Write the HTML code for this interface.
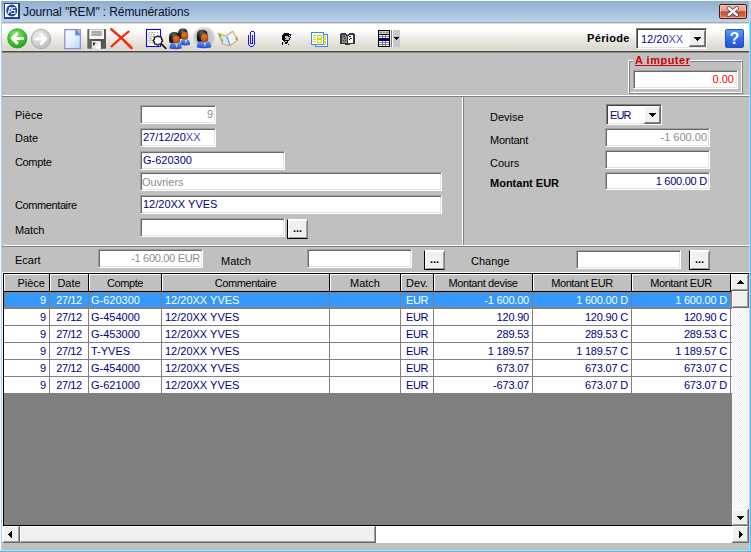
<!DOCTYPE html>
<html><head><meta charset="utf-8">
<style>
*{box-sizing:border-box}
html,body{margin:0;padding:0}
body{width:751px;height:552px;overflow:hidden;position:relative;background:#c0c0c0;font-family:"Liberation Sans",sans-serif;font-size:11px;color:#000}
.a{position:absolute}
.t{position:absolute;white-space:nowrap;line-height:13px;font-size:11px}
.edit{position:absolute;background:#fff;border:1px solid;border-color:#a0a0a0 #fff #fff #a0a0a0;box-shadow:inset 1px 1px 0 #696969, inset -1px -1px 0 #e3e3e3}
.edit span{position:absolute;top:2px;line-height:13px;white-space:nowrap}
.btn{position:absolute;background:#f0f0f0;border:1px solid;border-color:#fff #808080 #000 #000;box-shadow:inset 1px 1px 0 #fff, inset -1px -1px 0 #a0a0a0}
.btn i{position:absolute;left:0;right:0;text-align:center;top:2px;font-style:normal;font-weight:bold;font-size:11px;line-height:13px;letter-spacing:0}
.nv{color:#000080}
.gy{color:#808080}
</style></head><body>
<!-- window borders -->
<div class="a" style="left:0;top:0;width:1px;height:552px;background:#f6f9fc"></div>
<div class="a" style="left:1px;top:0;width:1px;height:552px;background:#b4cde8"></div>
<div class="a" style="left:749px;top:0;width:1px;height:552px;background:#c8d4ec"></div>
<div class="a" style="left:750px;top:0;width:1px;height:552px;background:linear-gradient(#b8d0ea 0px,#b8d0ea 18px,#38c8f0 24px)"></div>
<div class="a" style="left:0;top:550px;width:751px;height:1px;background:#c8d4ec"></div>
<div class="a" style="left:0;top:551px;width:751px;height:1px;background:#38c8f0"></div>
<!-- title bar -->
<div class="a" style="left:0;top:0;width:751px;height:1px;background:#f4f8fc"></div>
<div class="a" style="left:1px;top:1px;width:748px;height:21px;background:linear-gradient(#8fadcd,#bad3ec)"></div>
<div class="a" style="left:2px;top:22px;width:747px;height:1px;background:#aeaba2"></div>
<div class="a" style="left:2px;top:23px;width:747px;height:1px;background:#dcd9d2"></div>
<!-- app icon -->
<div class="a" style="left:4px;top:3px;width:16px;height:16px;background:#283c90"></div>
<div class="a" style="left:5px;top:4px;width:13px;height:13px;background:#fff"></div>
<svg class="a" style="left:4px;top:3px" width="16" height="16" viewBox="4 3 16 16">
<ellipse cx="11.75" cy="10.5" rx="5.5" ry="5.9" fill="#1c4aa6"/>
<path d="M8 13.8 L9.9 7.6 H10.7 L11.6 10.8 M8.8 11.6 H11.2" fill="none" stroke="#fff" stroke-width="1.05"/>
<path d="M15.4 7.7 H12.2 V10.4 H14.9 V13.5 H11" fill="none" stroke="#fff" stroke-width="1.05"/>
</svg>
<div class="t" style="left:23px;top:5px;font-size:12px;line-height:15px;color:#10102a;letter-spacing:-0.1px">Journal "REM" : Rémunérations</div>
<!-- close -->
<div class="a" style="left:719px;top:4px;width:28px;height:15px;border:1px solid #4a1a1a;border-radius:2px;background:linear-gradient(#f0b8a8 0%,#e69c88 45%,#c64a2c 52%,#d4603e 80%,#e08868 100%);box-shadow:inset 0 0 0 1px rgba(255,220,210,0.45)"></div>
<svg class="a" style="left:719px;top:4px" width="28" height="15" viewBox="719 4 28 15"><path d="M728.5 8 L737 15 M737 8 L728.5 15" stroke="#3a3a56" stroke-width="3.8" stroke-linecap="round"/><path d="M728.5 8 L737 15 M737 8 L728.5 15" stroke="#fff" stroke-width="2.3" stroke-linecap="round"/></svg>

<!-- toolbar -->
<div class="a" style="left:2px;top:24px;width:747px;height:27px;background:linear-gradient(#ffffff 0%,#fdfdfc 25%,#ebe8e2 60%,#dbd7cf 92%,#e3e0d6 100%)"></div>
<div class="a" style="left:2px;top:51px;width:747px;height:1px;background:#444"></div>
<div class="a" style="left:2px;top:52px;width:747px;height:1px;background:#8a8a8a"></div>


<!-- top panel separator -->
<div class="a" style="left:3px;top:95px;width:746px;height:1px;background:#fff"></div>
<div class="a" style="left:2px;top:96px;width:747px;height:1px;background:#808080"></div>
<!-- A imputer group -->
<div class="a" style="left:628px;top:60px;width:115px;height:34px;border:1px solid;border-color:#fff #808080 #808080 #fff;box-shadow:inset 1px 1px 0 #808080, inset -1px -1px 0 #fff"></div>
<div class="a" style="left:633px;top:55px;width:57px;height:9px;background:#c0c0c0"></div>
<div class="t" style="left:635px;top:54px;color:#d00000;font-weight:bold;font-size:11px;line-height:13px;letter-spacing:0.5px">A imputer</div>
<div class="a" style="left:635px;top:65px;width:55px;height:1px;background:#d00000"></div>
<div class="edit" style="left:633px;top:70px;width:105px;height:19px"><span style="right:3px;color:#ff0000">0.00</span></div>

<!-- form left -->
<div class="t" style="left:15px;top:109px">Pièce</div>
<div class="t" style="left:15px;top:132px">Date</div>
<div class="t" style="left:15px;top:156px;letter-spacing:-0.35px">Compte</div>
<div class="t" style="left:15px;top:199px;letter-spacing:-0.4px">Commentaire</div>
<div class="t" style="left:15px;top:224px;letter-spacing:-0.15px">Match</div>
<div class="edit" style="left:140px;top:105px;width:76px;height:19px"><span style="right:2px;color:#8c8c8c">9</span></div>
<div class="edit" style="left:140px;top:128px;width:76px;height:19px"><span class="nv" style="left:2px">27/12/20<span style="position:static;color:#4848c0">XX</span></span></div>
<div class="edit" style="left:140px;top:151px;width:145px;height:19px"><span class="nv" style="left:2px;top:2px">G-620300</span></div>
<div class="edit" style="left:140px;top:172px;width:302px;height:19px"><span style="left:1px;top:3px;color:#8c8c8c">Ouvriers</span></div>
<div class="edit" style="left:140px;top:195px;width:302px;height:19px"><span class="nv" style="left:2px;top:2px">12/20XX YVES</span></div>
<div class="edit" style="left:140px;top:218px;width:145px;height:19px"></div>
<div class="btn" style="left:287px;top:219px;width:21px;height:20px"><i>...</i></div>
<!-- vertical separator -->
<div class="a" style="left:462px;top:97px;width:1px;height:148px;background:#fff"></div>
<div class="a" style="left:463px;top:97px;width:1px;height:148px;background:#808080"></div>
<!-- form right -->
<div class="t" style="left:490px;top:111px">Devise</div>
<div class="t" style="left:490px;top:134px;letter-spacing:-0.25px">Montant</div>
<div class="t" style="left:490px;top:157px">Cours</div>
<div class="t" style="left:490px;top:177px;font-weight:bold">Montant EUR</div>
<div class="edit" style="left:606px;top:104px;width:56px;height:21px;border-color:#808080 #fff #fff #808080;box-shadow:inset 1px 1px 0 #404040, inset -1px -1px 0 #e3e3e3"><span class="nv" style="left:3px;top:4px;letter-spacing:-0.9px">EUR</span></div>
<div class="a" style="left:644px;top:106px;width:17px;height:18px;background:#f0f0f0;border-right:1px solid #696969;border-bottom:1px solid #696969;box-shadow:inset 1px 1px 0 #fff, inset -1px -1px 0 #808080"></div>
<svg class="a" style="left:649px;top:113px" width="8" height="5" shape-rendering="crispEdges"><rect x="0" y="0" width="7" height="1"/><rect x="1" y="1" width="5" height="1"/><rect x="2" y="2" width="3" height="1"/><rect x="3" y="3" width="1" height="1"/></svg>
<div class="edit" style="left:605px;top:128px;width:105px;height:19px"><span style="right:2px;top:2px;color:#8c8c8c">-1 600.00</span></div>
<div class="edit" style="left:605px;top:150px;width:105px;height:19px"></div>
<div class="edit" style="left:605px;top:172px;width:105px;height:18px"><span class="nv" style="right:2px;top:2px;letter-spacing:-0.25px">1 600.00 D</span></div>
<!-- bottom separator -->
<div class="a" style="left:3px;top:245px;width:746px;height:1px;background:#fff"></div>
<div class="a" style="left:2px;top:246px;width:747px;height:1px;background:#808080"></div>
<!-- ecart row -->
<div class="t" style="left:15px;top:254px">Ecart</div>
<div class="edit" style="left:98px;top:249px;width:105px;height:19px"><span style="right:2px;color:#8c8c8c;letter-spacing:-0.3px">-1 600.00 EUR</span></div>
<div class="t" style="left:221px;top:255px">Match</div>
<div class="edit" style="left:307px;top:249px;width:105px;height:19px"></div>
<div class="btn" style="left:424px;top:250px;width:21px;height:20px"><i>...</i></div>
<div class="t" style="left:471px;top:255px">Change</div>
<div class="edit" style="left:576px;top:250px;width:105px;height:19px"></div>
<div class="btn" style="left:689px;top:250px;width:21px;height:20px"><i>...</i></div>

<!-- grid -->
<div class="a" style="left:2px;top:272px;width:747px;height:1px;background:#fff"></div>
<div class="a" style="left:2px;top:272px;width:1px;height:270px;background:#fff"></div>
<div class="a" style="left:3px;top:273px;width:746px;height:1px;background:#000"></div>
<div class="a" style="left:3px;top:273px;width:1px;height:253px;background:#000"></div>
<div class="a" style="left:4px;top:274px;width:728px;height:251px;background:#808080"></div>
<div class="a" style="left:3px;top:525px;width:729px;height:1px;background:#000"></div>
<div class="a" style="left:4px;top:274px;width:727px;height:18px;background:#000"></div>
<div class="a" style="left:4px;top:274px;width:45px;height:17px;background:#c0c0c0;border-top:1px solid #fff;border-left:1px solid #fff"></div>
<div class="t" style="left:4px;top:277px;width:41px;text-align:right">Pièce</div>
<div class="a" style="left:50px;top:274px;width:38px;height:17px;background:#c0c0c0;border-top:1px solid #fff;border-left:1px solid #fff"></div>
<div class="t" style="left:50px;top:277px;width:38px;text-align:center;letter-spacing:0">Date</div>
<div class="a" style="left:89px;top:274px;width:72px;height:17px;background:#c0c0c0;border-top:1px solid #fff;border-left:1px solid #fff"></div>
<div class="t" style="left:89px;top:277px;width:72px;text-align:center;letter-spacing:-0.4px">Compte</div>
<div class="a" style="left:162px;top:274px;width:167px;height:17px;background:#c0c0c0;border-top:1px solid #fff;border-left:1px solid #fff"></div>
<div class="t" style="left:162px;top:277px;width:167px;text-align:center;letter-spacing:-0.4px">Commentaire</div>
<div class="a" style="left:330px;top:274px;width:70px;height:17px;background:#c0c0c0;border-top:1px solid #fff;border-left:1px solid #fff"></div>
<div class="t" style="left:330px;top:277px;width:70px;text-align:center;letter-spacing:0">Match</div>
<div class="a" style="left:401px;top:274px;width:32px;height:17px;background:#c0c0c0;border-top:1px solid #fff;border-left:1px solid #fff"></div>
<div class="t" style="left:401px;top:277px;width:32px;text-align:center;letter-spacing:0">Dev.</div>
<div class="a" style="left:434px;top:274px;width:98px;height:17px;background:#c0c0c0;border-top:1px solid #fff;border-left:1px solid #fff"></div>
<div class="t" style="left:434px;top:277px;width:98px;text-align:center;letter-spacing:-0.4px">Montant devise</div>
<div class="a" style="left:533px;top:274px;width:98px;height:17px;background:#c0c0c0;border-top:1px solid #fff;border-left:1px solid #fff"></div>
<div class="t" style="left:533px;top:277px;width:98px;text-align:center;letter-spacing:-0.4px">Montant EUR</div>
<div class="a" style="left:632px;top:274px;width:98px;height:17px;background:#c0c0c0;border-top:1px solid #fff;border-left:1px solid #fff"></div>
<div class="t" style="left:632px;top:277px;width:98px;text-align:center;letter-spacing:-0.4px">Montant EUR</div>
<div class="a" style="left:4px;top:292px;width:728px;height:17px;background:#808080"></div>
<div class="a" style="left:4px;top:292px;width:45px;height:16px;background:#3399ff"></div>
<div class="t" style="left:4px;top:294px;width:42px;text-align:right;color:#fff;letter-spacing:0">9</div>
<div class="a" style="left:50px;top:292px;width:38px;height:16px;background:#3399ff"></div>
<div class="t" style="left:50px;top:294px;width:38px;text-align:center;color:#fff;letter-spacing:-0.4px">27/12</div>
<div class="a" style="left:89px;top:292px;width:72px;height:16px;background:#3399ff"></div>
<div class="t" style="left:91px;top:294px;color:#fff">G-620300</div>
<div class="a" style="left:162px;top:292px;width:167px;height:16px;background:#3399ff"></div>
<div class="t" style="left:165px;top:294px;color:#fff">12/20XX YVES</div>
<div class="a" style="left:330px;top:292px;width:70px;height:16px;background:#3399ff"></div>
<div class="a" style="left:401px;top:292px;width:32px;height:16px;background:#3399ff"></div>
<div class="t" style="left:401px;top:294px;width:32px;text-align:center;color:#fff;letter-spacing:-0.4px">EUR</div>
<div class="a" style="left:434px;top:292px;width:98px;height:16px;background:#3399ff"></div>
<div class="t" style="left:434px;top:294px;width:95px;text-align:right;color:#fff;letter-spacing:-0.2px">-1 600.00</div>
<div class="a" style="left:533px;top:292px;width:98px;height:16px;background:#3399ff"></div>
<div class="t" style="left:533px;top:294px;width:95px;text-align:right;color:#fff;letter-spacing:-0.2px">1 600.00 D</div>
<div class="a" style="left:632px;top:292px;width:98px;height:16px;background:#3399ff"></div>
<div class="t" style="left:632px;top:294px;width:95px;text-align:right;color:#fff;letter-spacing:-0.2px">1 600.00 D</div>
<div class="a" style="left:731px;top:292px;width:1px;height:16px;background:#3399ff"></div>
<div class="a" style="left:4px;top:292px;width:728px;height:16px;border:1px dotted #e07000"></div>
<div class="a" style="left:4px;top:309px;width:728px;height:17px;background:#808080"></div>
<div class="a" style="left:4px;top:309px;width:45px;height:16px;background:#fff"></div>
<div class="t" style="left:4px;top:311px;width:42px;text-align:right;color:#000080;letter-spacing:0">9</div>
<div class="a" style="left:50px;top:309px;width:38px;height:16px;background:#fff"></div>
<div class="t" style="left:50px;top:311px;width:38px;text-align:center;color:#000080;letter-spacing:-0.4px">27/12</div>
<div class="a" style="left:89px;top:309px;width:72px;height:16px;background:#fff"></div>
<div class="t" style="left:91px;top:311px;color:#000080">G-454000</div>
<div class="a" style="left:162px;top:309px;width:167px;height:16px;background:#fff"></div>
<div class="t" style="left:165px;top:311px;color:#000080">12/20XX YVES</div>
<div class="a" style="left:330px;top:309px;width:70px;height:16px;background:#fff"></div>
<div class="a" style="left:401px;top:309px;width:32px;height:16px;background:#fff"></div>
<div class="t" style="left:401px;top:311px;width:32px;text-align:center;color:#000080;letter-spacing:-0.4px">EUR</div>
<div class="a" style="left:434px;top:309px;width:98px;height:16px;background:#fff"></div>
<div class="t" style="left:434px;top:311px;width:95px;text-align:right;color:#000080;letter-spacing:-0.2px">120.90</div>
<div class="a" style="left:533px;top:309px;width:98px;height:16px;background:#fff"></div>
<div class="t" style="left:533px;top:311px;width:95px;text-align:right;color:#000080;letter-spacing:-0.2px">120.90 C</div>
<div class="a" style="left:632px;top:309px;width:98px;height:16px;background:#fff"></div>
<div class="t" style="left:632px;top:311px;width:95px;text-align:right;color:#000080;letter-spacing:-0.2px">120.90 C</div>
<div class="a" style="left:731px;top:309px;width:1px;height:16px;background:#fff"></div>
<div class="a" style="left:4px;top:326px;width:728px;height:17px;background:#808080"></div>
<div class="a" style="left:4px;top:326px;width:45px;height:16px;background:#fff"></div>
<div class="t" style="left:4px;top:328px;width:42px;text-align:right;color:#000080;letter-spacing:0">9</div>
<div class="a" style="left:50px;top:326px;width:38px;height:16px;background:#fff"></div>
<div class="t" style="left:50px;top:328px;width:38px;text-align:center;color:#000080;letter-spacing:-0.4px">27/12</div>
<div class="a" style="left:89px;top:326px;width:72px;height:16px;background:#fff"></div>
<div class="t" style="left:91px;top:328px;color:#000080">G-453000</div>
<div class="a" style="left:162px;top:326px;width:167px;height:16px;background:#fff"></div>
<div class="t" style="left:165px;top:328px;color:#000080">12/20XX YVES</div>
<div class="a" style="left:330px;top:326px;width:70px;height:16px;background:#fff"></div>
<div class="a" style="left:401px;top:326px;width:32px;height:16px;background:#fff"></div>
<div class="t" style="left:401px;top:328px;width:32px;text-align:center;color:#000080;letter-spacing:-0.4px">EUR</div>
<div class="a" style="left:434px;top:326px;width:98px;height:16px;background:#fff"></div>
<div class="t" style="left:434px;top:328px;width:95px;text-align:right;color:#000080;letter-spacing:-0.2px">289.53</div>
<div class="a" style="left:533px;top:326px;width:98px;height:16px;background:#fff"></div>
<div class="t" style="left:533px;top:328px;width:95px;text-align:right;color:#000080;letter-spacing:-0.2px">289.53 C</div>
<div class="a" style="left:632px;top:326px;width:98px;height:16px;background:#fff"></div>
<div class="t" style="left:632px;top:328px;width:95px;text-align:right;color:#000080;letter-spacing:-0.2px">289.53 C</div>
<div class="a" style="left:731px;top:326px;width:1px;height:16px;background:#fff"></div>
<div class="a" style="left:4px;top:343px;width:728px;height:17px;background:#808080"></div>
<div class="a" style="left:4px;top:343px;width:45px;height:16px;background:#fff"></div>
<div class="t" style="left:4px;top:345px;width:42px;text-align:right;color:#000080;letter-spacing:0">9</div>
<div class="a" style="left:50px;top:343px;width:38px;height:16px;background:#fff"></div>
<div class="t" style="left:50px;top:345px;width:38px;text-align:center;color:#000080;letter-spacing:-0.4px">27/12</div>
<div class="a" style="left:89px;top:343px;width:72px;height:16px;background:#fff"></div>
<div class="t" style="left:91px;top:345px;color:#000080">T-YVES</div>
<div class="a" style="left:162px;top:343px;width:167px;height:16px;background:#fff"></div>
<div class="t" style="left:165px;top:345px;color:#000080">12/20XX YVES</div>
<div class="a" style="left:330px;top:343px;width:70px;height:16px;background:#fff"></div>
<div class="a" style="left:401px;top:343px;width:32px;height:16px;background:#fff"></div>
<div class="t" style="left:401px;top:345px;width:32px;text-align:center;color:#000080;letter-spacing:-0.4px">EUR</div>
<div class="a" style="left:434px;top:343px;width:98px;height:16px;background:#fff"></div>
<div class="t" style="left:434px;top:345px;width:95px;text-align:right;color:#000080;letter-spacing:-0.2px">1 189.57</div>
<div class="a" style="left:533px;top:343px;width:98px;height:16px;background:#fff"></div>
<div class="t" style="left:533px;top:345px;width:95px;text-align:right;color:#000080;letter-spacing:-0.2px">1 189.57 C</div>
<div class="a" style="left:632px;top:343px;width:98px;height:16px;background:#fff"></div>
<div class="t" style="left:632px;top:345px;width:95px;text-align:right;color:#000080;letter-spacing:-0.2px">1 189.57 C</div>
<div class="a" style="left:731px;top:343px;width:1px;height:16px;background:#fff"></div>
<div class="a" style="left:4px;top:360px;width:728px;height:17px;background:#808080"></div>
<div class="a" style="left:4px;top:360px;width:45px;height:16px;background:#fff"></div>
<div class="t" style="left:4px;top:362px;width:42px;text-align:right;color:#000080;letter-spacing:0">9</div>
<div class="a" style="left:50px;top:360px;width:38px;height:16px;background:#fff"></div>
<div class="t" style="left:50px;top:362px;width:38px;text-align:center;color:#000080;letter-spacing:-0.4px">27/12</div>
<div class="a" style="left:89px;top:360px;width:72px;height:16px;background:#fff"></div>
<div class="t" style="left:91px;top:362px;color:#000080">G-454000</div>
<div class="a" style="left:162px;top:360px;width:167px;height:16px;background:#fff"></div>
<div class="t" style="left:165px;top:362px;color:#000080">12/20XX YVES</div>
<div class="a" style="left:330px;top:360px;width:70px;height:16px;background:#fff"></div>
<div class="a" style="left:401px;top:360px;width:32px;height:16px;background:#fff"></div>
<div class="t" style="left:401px;top:362px;width:32px;text-align:center;color:#000080;letter-spacing:-0.4px">EUR</div>
<div class="a" style="left:434px;top:360px;width:98px;height:16px;background:#fff"></div>
<div class="t" style="left:434px;top:362px;width:95px;text-align:right;color:#000080;letter-spacing:-0.2px">673.07</div>
<div class="a" style="left:533px;top:360px;width:98px;height:16px;background:#fff"></div>
<div class="t" style="left:533px;top:362px;width:95px;text-align:right;color:#000080;letter-spacing:-0.2px">673.07 C</div>
<div class="a" style="left:632px;top:360px;width:98px;height:16px;background:#fff"></div>
<div class="t" style="left:632px;top:362px;width:95px;text-align:right;color:#000080;letter-spacing:-0.2px">673.07 C</div>
<div class="a" style="left:731px;top:360px;width:1px;height:16px;background:#fff"></div>
<div class="a" style="left:4px;top:377px;width:728px;height:17px;background:#808080"></div>
<div class="a" style="left:4px;top:377px;width:45px;height:16px;background:#fff"></div>
<div class="t" style="left:4px;top:379px;width:42px;text-align:right;color:#000080;letter-spacing:0">9</div>
<div class="a" style="left:50px;top:377px;width:38px;height:16px;background:#fff"></div>
<div class="t" style="left:50px;top:379px;width:38px;text-align:center;color:#000080;letter-spacing:-0.4px">27/12</div>
<div class="a" style="left:89px;top:377px;width:72px;height:16px;background:#fff"></div>
<div class="t" style="left:91px;top:379px;color:#000080">G-621000</div>
<div class="a" style="left:162px;top:377px;width:167px;height:16px;background:#fff"></div>
<div class="t" style="left:165px;top:379px;color:#000080">12/20XX YVES</div>
<div class="a" style="left:330px;top:377px;width:70px;height:16px;background:#fff"></div>
<div class="a" style="left:401px;top:377px;width:32px;height:16px;background:#fff"></div>
<div class="t" style="left:401px;top:379px;width:32px;text-align:center;color:#000080;letter-spacing:-0.4px">EUR</div>
<div class="a" style="left:434px;top:377px;width:98px;height:16px;background:#fff"></div>
<div class="t" style="left:434px;top:379px;width:95px;text-align:right;color:#000080;letter-spacing:-0.2px">-673.07</div>
<div class="a" style="left:533px;top:377px;width:98px;height:16px;background:#fff"></div>
<div class="t" style="left:533px;top:379px;width:95px;text-align:right;color:#000080;letter-spacing:-0.2px">673.07 D</div>
<div class="a" style="left:632px;top:377px;width:98px;height:16px;background:#fff"></div>
<div class="t" style="left:632px;top:379px;width:95px;text-align:right;color:#000080;letter-spacing:-0.2px">673.07 D</div>
<div class="a" style="left:731px;top:377px;width:1px;height:16px;background:#fff"></div>
<div class="a" style="left:732px;top:274px;width:17px;height:252px;background-color:#fff;background-image:repeating-conic-gradient(#ececec 0 25%, #fff 0 50%);background-size:2px 2px"></div>
<div class="a" style="left:731px;top:274px;width:18px;height:17px;background:#f0f0f0;border-right:1px solid #696969;border-bottom:1px solid #696969;box-shadow:inset 1px 1px 0 #fff, inset -1px -1px 0 #a0a0a0"></div>
<div class="a" style="left:740px;top:280px;width:1px;height:1px;background:#000"></div>
<div class="a" style="left:739px;top:281px;width:3px;height:1px;background:#000"></div>
<div class="a" style="left:738px;top:282px;width:5px;height:1px;background:#000"></div>
<div class="a" style="left:737px;top:283px;width:7px;height:1px;background:#000"></div>
<div class="a" style="left:732px;top:291px;width:17px;height:17px;background:#f0f0f0;border-right:1px solid #696969;border-bottom:1px solid #696969;box-shadow:inset 1px 1px 0 #fff, inset -1px -1px 0 #a0a0a0"></div>
<div class="a" style="left:732px;top:509px;width:17px;height:17px;background:#f0f0f0;border-right:1px solid #696969;border-bottom:1px solid #696969;box-shadow:inset 1px 1px 0 #fff, inset -1px -1px 0 #a0a0a0"></div>
<div class="a" style="left:737px;top:516px;width:7px;height:1px;background:#000"></div>
<div class="a" style="left:738px;top:517px;width:5px;height:1px;background:#000"></div>
<div class="a" style="left:739px;top:518px;width:3px;height:1px;background:#000"></div>
<div class="a" style="left:740px;top:519px;width:1px;height:1px;background:#000"></div>
<div class="a" style="left:3px;top:526px;width:746px;height:17px;background:#fff"></div>
<div class="a" style="left:3px;top:526px;width:17px;height:17px;background:#f0f0f0;border-right:1px solid #696969;border-bottom:1px solid #696969;box-shadow:inset 1px 1px 0 #fff, inset -1px -1px 0 #a0a0a0"></div>
<div class="a" style="left:8px;top:534px;width:1px;height:1px;background:#000"></div>
<div class="a" style="left:9px;top:533px;width:1px;height:3px;background:#000"></div>
<div class="a" style="left:10px;top:532px;width:1px;height:5px;background:#000"></div>
<div class="a" style="left:11px;top:531px;width:1px;height:7px;background:#000"></div>
<div class="a" style="left:20px;top:526px;width:356px;height:17px;background:#f0f0f0;border-right:1px solid #696969;border-bottom:1px solid #696969;box-shadow:inset 1px 1px 0 #fff, inset -1px -1px 0 #a0a0a0"></div>
<div class="a" style="left:732px;top:526px;width:17px;height:17px;background:#f0f0f0;border-right:1px solid #696969;border-bottom:1px solid #696969;box-shadow:inset 1px 1px 0 #fff, inset -1px -1px 0 #a0a0a0"></div>
<div class="a" style="left:739px;top:531px;width:1px;height:7px;background:#000"></div>
<div class="a" style="left:740px;top:532px;width:1px;height:5px;background:#000"></div>
<div class="a" style="left:741px;top:533px;width:1px;height:3px;background:#000"></div>
<div class="a" style="left:742px;top:534px;width:1px;height:1px;background:#000"></div>
<!-- periode -->
<div class="t" style="left:587px;top:32px;font-weight:bold;color:#000;letter-spacing:0.35px">Période</div>
<div class="edit" style="left:636px;top:28px;width:71px;height:21px;border-color:#808080 #fff #fff #808080;box-shadow:inset 1px 1px 0 #404040, inset -1px -1px 0 #e3e3e3"><span class="nv" style="left:4px;top:4px">12/20<span style="position:static;color:#4848c8">XX</span></span></div>
<div class="a" style="left:689px;top:30px;width:17px;height:17px;background:#f0f0f0;border-right:1px solid #696969;border-bottom:1px solid #696969;box-shadow:inset 1px 1px 0 #fff, inset -1px -1px 0 #808080"></div>
<svg class="a" style="left:694px;top:37px" width="8" height="5" shape-rendering="crispEdges"><rect x="0" y="0" width="7" height="1"/><rect x="1" y="1" width="5" height="1"/><rect x="2" y="2" width="3" height="1"/><rect x="3" y="3" width="1" height="1"/></svg>
<div class="a" style="left:725px;top:29px;width:19px;height:19px;border-radius:2px;background:linear-gradient(#5a9cff,#2f6df0 50%,#1f55d8);border:1px solid #2a4fb0"></div>
<div class="t" style="left:725px;top:30px;width:19px;text-align:center;color:#fff;font-weight:bold;font-size:16px;line-height:17px">?</div>
<!-- toolbar icons -->
<svg class="a" style="left:0;top:23px" width="420" height="28" viewBox="0 23 420 28">
 <defs>
  <radialGradient id="gG" cx="0.4" cy="0.3" r="0.8"><stop offset="0" stop-color="#9be27a"/><stop offset="0.6" stop-color="#3cbf2c"/><stop offset="1" stop-color="#1a9a1a"/></radialGradient>
  <radialGradient id="gY" cx="0.4" cy="0.3" r="0.8"><stop offset="0" stop-color="#eeeeee"/><stop offset="0.6" stop-color="#cfcfcf"/><stop offset="1" stop-color="#b4b4b4"/></radialGradient>
  <radialGradient id="glow" cx="0.5" cy="0.5" r="0.5"><stop offset="0" stop-color="#a8a8a8"/><stop offset="0.75" stop-color="#cfcfcf"/><stop offset="1" stop-color="#f4f4f4" stop-opacity="0"/></radialGradient>
  <linearGradient id="doc" x1="0" y1="0" x2="1" y2="1"><stop offset="0" stop-color="#f4f8ff"/><stop offset="1" stop-color="#b8d4f6"/></linearGradient>
 </defs>
 <!-- back -->
 <circle cx="17.3" cy="38.4" r="9.6" fill="url(#gG)" stroke="#13a013" stroke-width="0.8"/>
 <path d="M22.8 38.4 H13.5 M16.9 33.9 L12.4 38.4 L16.9 42.9" fill="none" stroke="#fff" stroke-width="3" stroke-linecap="round" stroke-linejoin="round"/>
 <!-- fwd -->
 <circle cx="41" cy="39" r="9.7" fill="url(#gY)" stroke="#a8a8a8" stroke-width="0.9"/>
 <path d="M35.3 39 H44.8 M41.2 34.5 L45.7 39 L41.2 43.5" fill="none" stroke="#fcfcfc" stroke-width="3" stroke-linecap="round" stroke-linejoin="round"/>
 <!-- doc -->
 <defs><linearGradient id="doc2" x1="0" y1="0" x2="1" y2="1"><stop offset="0" stop-color="#ffffff"/><stop offset="0.5" stop-color="#e4f0fc"/><stop offset="1" stop-color="#b4d6f6"/></linearGradient></defs>
 <rect x="64.8" y="29.6" width="15.6" height="19" fill="url(#doc2)" stroke="#8a92d0" stroke-width="1.3"/>
 <path d="M75.6 29.6 H80.4 V35 Z" fill="#b4b4c0"/>
 <path d="M75.6 29.6 L80.4 35 H75.6 Z" fill="#4a90e8" stroke="#7a84c8" stroke-width="0.8"/>
 <!-- floppy -->
 <defs><linearGradient id="flp" x1="0" y1="0" x2="1" y2="0"><stop offset="0" stop-color="#6a6a6a"/><stop offset="0.5" stop-color="#4a4a4a"/><stop offset="1" stop-color="#5a5a5a"/></linearGradient></defs>
 <rect x="87.3" y="29" width="18.7" height="19.8" rx="0.8" fill="url(#flp)"/>
 <rect x="89.3" y="29.3" width="14.7" height="9.7" fill="#f4f4f4"/>
 <rect x="91.5" y="31" width="10.2" height="5" fill="#a8a8a8"/>
 <rect x="91.5" y="33.2" width="10.2" height="0.8" fill="#c4c4c4"/>
 <path d="M91.7 41 H100.6 V48.8 H91.7 Z" fill="#e8e8e8"/>
 <path d="M95 48.8 L100.6 42 V48.8 Z" fill="#fff"/>
 <path d="M92.5 42.5 H95.5 L93.8 46.5 Z" fill="#333"/>
 <!-- red X -->
 <path d="M111.3 29.3 Q121 37 131.5 48" fill="none" stroke="#ee3010" stroke-width="2.6" stroke-linecap="round"/>
 <path d="M128.6 31.6 Q120 38.5 111.6 46.3" fill="none" stroke="#ee3010" stroke-width="2.3" stroke-linecap="round"/>
 <!-- preview -->
 <rect x="146.5" y="29.5" width="14" height="17" fill="#fff" stroke="#0a0aff" stroke-width="1.1"/>
 <g fill="#a4a4a4"><rect x="149" y="32" width="1.2" height="1.2"/><rect x="151.3" y="32" width="2" height="1.2"/><rect x="154.2" y="32" width="1.2" height="1.2"/><rect x="157" y="32" width="1.2" height="1.2"/>
 <rect x="148.3" y="34" width="1.2" height="1.2"/><rect x="151" y="34" width="1.2" height="1.2"/><rect x="153" y="34" width="2" height="1.2"/>
 <rect x="148.3" y="36" width="1.2" height="1.2"/><rect x="150.3" y="36" width="1.2" height="1.2"/><rect x="152.3" y="36" width="2" height="1.2"/>
 <rect x="149" y="38" width="3" height="1.2"/>
 <rect x="148.3" y="40" width="1.2" height="1.2"/><rect x="150.3" y="40" width="1.2" height="1.2"/><rect x="152.3" y="40" width="1.2" height="1.2"/>
 <rect x="149.3" y="42" width="2" height="1.2"/><rect x="152.3" y="42" width="1.2" height="1.2"/></g>
 <path d="M161.3 43.8 L165.8 48.3" stroke="#111" stroke-width="1.7" stroke-linecap="round"/>
 <path d="M162.65 40.50 L162.12 41.34 L161.46 41.97 L161.48 42.89 L161.26 43.86 L160.29 44.08 L159.37 44.06 L158.74 44.72 L157.90 45.25 L157.06 44.72 L156.43 44.06 L155.51 44.08 L154.54 43.86 L154.32 42.89 L154.34 41.97 L153.68 41.34 L153.15 40.50 L153.68 39.66 L154.34 39.03 L154.32 38.11 L154.54 37.14 L155.51 36.92 L156.43 36.94 L157.06 36.28 L157.90 35.75 L158.74 36.28 L159.37 36.94 L160.29 36.92 L161.26 37.14 L161.48 38.11 L161.46 39.03 L162.12 39.66 Z" fill="#f6f6f6" stroke="#111" stroke-width="1.35" stroke-linejoin="round"/>
 <!-- two persons -->
 <defs>
  <radialGradient id="face" cx="0.45" cy="0.35" r="0.75"><stop offset="0" stop-color="#e07828"/><stop offset="0.6" stop-color="#c0580e"/><stop offset="1" stop-color="#7a2c06"/></radialGradient>
  <linearGradient id="body" x1="0" y1="0" x2="0" y2="1"><stop offset="0" stop-color="#6a9af4"/><stop offset="1" stop-color="#2a48c8"/></linearGradient>
  <radialGradient id="hair" cx="0.45" cy="0.25" r="0.8"><stop offset="0" stop-color="#666"/><stop offset="0.5" stop-color="#222"/><stop offset="1" stop-color="#050505"/></radialGradient>
 </defs>
 <path d="M180.2 44.7 Q179.89999999999998 40.1 183.2 38.9 L187 38.9 Q190.3 40.1 190 44.7 Q185.1 46.1 180.2 44.7 Z" fill="url(#body)"/>
 <path d="M184.5 39.199999999999996 L186.0 44.3 L187.29999999999998 39.199999999999996 Z" fill="#a8dcf4"/>
 <path d="M182.75 28.5 Q188.0 28.5 187.5 33.75 L187.5 38 L179 39 Q177.8 37 178 33.75 Q178 28.5 182.75 28.5 Z" fill="url(#hair)"/>
 <ellipse cx="184.65" cy="35.7" rx="3.6500000000000057" ry="3.9000000000000004" fill="url(#face)"/>
 <path d="M169.5 48.5 Q169.2 43.800000000000004 172.5 42.6 L178.7 42.6 Q182.0 43.800000000000004 181.7 48.5 Q175.6 49.9 169.5 48.5 Z" fill="url(#body)"/>
 <path d="M175.0 42.9 L176.5 48.099999999999994 L177.79999999999998 42.9 Z" fill="#a8dcf4"/>
 <path d="M174.25 32 Q180.0 32 179.5 37.5 L179.5 42 L170 43 Q168.8 41 169 37.5 Q169 32 174.25 32 Z" fill="url(#hair)"/>
 <ellipse cx="176.3" cy="39.349999999999994" rx="3.700000000000003" ry="3.9499999999999993" fill="url(#face)"/>
 <!-- person with glow -->
 <defs><radialGradient id="glow2" cx="0.5" cy="0.5" r="0.5"><stop offset="0" stop-color="#bdbdbd"/><stop offset="0.65" stop-color="#c6c6c6"/><stop offset="0.88" stop-color="#dadada"/><stop offset="1" stop-color="#f2f2f0" stop-opacity="0"/></radialGradient></defs>
 <circle cx="204" cy="38.3" r="12.2" fill="url(#glow2)"/>
 <path d="M196.8 47.6 Q196.5 42.5 199.8 41.3 L208.2 41.3 Q211.5 42.5 211.2 47.6 Q204.0 49.0 196.8 47.6 Z" fill="url(#body)"/>
 <path d="M203.4 41.599999999999994 L204.9 47.199999999999996 L206.2 41.599999999999994 Z" fill="#a8dcf4"/>
 <path d="M202.2 29.8 Q208.1 29.8 207.6 35.8 L207.6 40.8 L197.8 41.8 Q196.60000000000002 39.8 196.8 35.8 Q196.8 29.8 202.2 29.8 Z" fill="url(#hair)"/>
 <ellipse cx="204.45" cy="37.849999999999994" rx="3.8500000000000085" ry="4.550000000000001" fill="url(#face)"/>
 <!-- open book -->
 <path d="M218.3 33.3 L225.8 36 L232.6 31.3 L237.8 40 L230 45.6 L222.6 44.2 Z" fill="#eaf4fc" stroke="#ef9a5a" stroke-width="1.1" stroke-linejoin="round"/>
 <path d="M220 35 L226 37 L229.5 44.5 L223.5 43.2 Z" fill="#d2e6f8"/>
 <path d="M226.8 36.5 L230 45" stroke="#5a9ae6" stroke-width="1.2"/>
 <path d="M221.5 39.5 L223.5 43" stroke="#8cc0ee" stroke-width="1"/>
 <rect x="219.2" y="34.5" width="2" height="2.4" fill="#40c040"/><rect x="220.3" y="37" width="2" height="2.2" fill="#f0d010"/><rect x="221.2" y="39.2" width="1.6" height="2" fill="#60a8f0"/>
 <rect x="235.6" y="37.5" width="1.8" height="2.4" fill="#50c040"/>
 <!-- paperclip -->
 <g shape-rendering="crispEdges"><rect x="251" y="31" width="3" height="1" fill="#1414ff"/><rect x="250" y="32" width="1" height="11" fill="#1414ff"/><rect x="254" y="32" width="1" height="13" fill="#1414ff"/><rect x="252" y="35" width="1" height="8" fill="#1414ff"/><rect x="250" y="43" width="3" height="1" fill="#1414ff"/><rect x="248" y="35" width="1" height="10" fill="#1414ff"/><rect x="249" y="45" width="1" height="1" fill="#1414ff"/><rect x="253" y="45" width="1" height="1" fill="#1414ff"/><rect x="250" y="46" width="3" height="1" fill="#1414ff"/></g>
 <!-- face -->
 <g shape-rendering="crispEdges">
 <rect x="285" y="36" width="3" height="1" fill="#c4c4c4"/>
 <rect x="285" y="37" width="5" height="1" fill="#c4c4c4"/>
 <rect x="286" y="38" width="3" height="1" fill="#c4c4c4"/>
 <rect x="285" y="39" width="4" height="1" fill="#c4c4c4"/>
 <rect x="285" y="41" width="2" height="1" fill="#c4c4c4"/>
 <rect x="283" y="43" width="2" height="1" fill="#c4c4c4"/>
 <rect x="284" y="33" width="5" height="1" fill="#000"/>
 <rect x="283" y="34" width="8" height="1" fill="#000"/>
 <rect x="282" y="35" width="7" height="1" fill="#000"/>
 <rect x="290" y="35" width="1" height="1" fill="#000"/>
 <rect x="282" y="36" width="3" height="1" fill="#000"/>
 <rect x="288" y="36" width="2" height="1" fill="#000"/>
 <rect x="282" y="37" width="3" height="1" fill="#000"/>
 <rect x="290" y="37" width="1" height="1" fill="#000"/>
 <rect x="282" y="38" width="4" height="1" fill="#000"/>
 <rect x="289" y="38" width="1" height="1" fill="#000"/>
 <rect x="282" y="39" width="3" height="1" fill="#000"/>
 <rect x="289" y="39" width="1" height="1" fill="#000"/>
 <rect x="283" y="40" width="6" height="1" fill="#000"/>
 <rect x="284" y="41" width="1" height="1" fill="#000"/>
 <rect x="287" y="41" width="1" height="1" fill="#000"/>
 <rect x="282" y="42" width="1" height="1" fill="#000"/>
 <rect x="285" y="42" width="3" height="1" fill="#000"/>
 <rect x="282" y="43" width="1" height="1" fill="#000"/>
 <rect x="285" y="43" width="2" height="1" fill="#000"/>
 <rect x="282" y="44" width="1" height="1" fill="#000"/>
 <rect x="288" y="44" width="1" height="1" fill="#000"/>
 <!-- windows icon -->
 <rect x="315" y="34" width="13" height="13" fill="#3a8af0"/>
 <rect x="316" y="35" width="11" height="11" fill="#fff"/>
 <rect x="311" y="32" width="13" height="13" fill="#3a8af0"/>
 <rect x="312" y="33" width="11" height="11" fill="#fff"/>
 <rect x="313" y="35" width="3" height="1" fill="#d8d800"/>
 <rect x="313" y="37" width="2" height="1" fill="#d8d800"/>
 <rect x="313" y="39" width="3" height="1" fill="#d8d800"/>
 <rect x="313" y="41" width="3" height="1" fill="#d8d800"/>
 <rect x="317" y="35" width="5" height="1" fill="#d8d800"/>
 <rect x="317" y="38" width="5" height="1" fill="#d8d800"/>
 <rect x="317" y="35" width="1" height="4" fill="#d8d800"/>
 <rect x="321" y="35" width="1" height="4" fill="#d8d800"/>
 <rect x="317" y="39" width="5" height="1" fill="#d8d800"/>
 <rect x="317" y="42" width="5" height="1" fill="#d8d800"/>
 <rect x="317" y="39" width="1" height="4" fill="#d8d800"/>
 <rect x="321" y="39" width="1" height="4" fill="#d8d800"/>
 <rect x="323" y="36" width="3" height="1" fill="#d8d800"/>
 <rect x="323" y="39" width="3" height="1" fill="#d8d800"/>
 <rect x="325" y="36" width="1" height="4" fill="#d8d800"/>
 <rect x="323" y="41" width="3" height="1" fill="#d8d800"/>
 <rect x="323" y="44" width="3" height="1" fill="#d8d800"/>
 <rect x="325" y="41" width="1" height="4" fill="#d8d800"/>
 <!-- gray book -->
 <rect x="341" y="33" width="5" height="1" fill="#383838"/>
 <rect x="349" y="33" width="5" height="1" fill="#383838"/>
 <rect x="340" y="34" width="7" height="1" fill="#383838"/>
 <rect x="348" y="34" width="7" height="1" fill="#383838"/>
 <rect x="340" y="35" width="2" height="8" fill="#383838"/>
 <rect x="353" y="35" width="2" height="8" fill="#383838"/>
 <rect x="342" y="35" width="5" height="8" fill="#888"/>
 <rect x="348" y="35" width="5" height="8" fill="#fff"/>
 <rect x="347" y="35" width="1" height="9" fill="#383838"/>
 <rect x="340" y="43" width="15" height="1" fill="#383838"/>
 <rect x="345" y="44" width="5" height="1" fill="#383838"/>
 <rect x="346" y="35" width="1" height="1" fill="#383838"/>
 <rect x="348" y="35" width="1" height="1" fill="#383838"/>
 <rect x="343" y="36" width="2" height="1" fill="#383838"/>
 <rect x="344" y="38" width="2" height="1" fill="#383838"/>
 <rect x="343" y="40" width="1" height="1" fill="#383838"/>
 <rect x="345" y="40" width="1" height="1" fill="#383838"/>
 <rect x="349" y="36" width="2" height="1" fill="#383838"/>
 <rect x="350" y="38" width="2" height="1" fill="#383838"/>
 <rect x="349" y="39" width="1" height="1" fill="#383838"/>
 <!-- grid icon -->
 <rect x="378" y="30" width="12" height="17" fill="#000"/>
 <rect x="379" y="31" width="10" height="3" fill="#c8c8c8"/>
 <rect x="380" y="32" width="2" height="1" fill="#888"/>
 <rect x="383" y="32" width="2" height="1" fill="#888"/>
 <rect x="386" y="32" width="2" height="1" fill="#888"/>
 <rect x="379" y="35" width="10" height="1" fill="#fff"/>
 <rect x="379" y="37" width="10" height="1" fill="#fff"/>
 <rect x="379" y="41" width="10" height="1" fill="#fff"/>
 <rect x="379" y="43" width="10" height="1" fill="#fff"/>
 <rect x="379" y="45" width="10" height="1" fill="#fff"/>
 <rect x="379" y="36" width="10" height="1" fill="#808080"/>
 <rect x="379" y="42" width="10" height="1" fill="#808080"/>
 <rect x="379" y="44" width="10" height="1" fill="#808080"/>
 <rect x="379" y="38" width="10" height="3" fill="#000090"/>
 <rect x="382" y="35" width="1" height="1" fill="#808080"/>
 <rect x="382" y="37" width="1" height="1" fill="#808080"/>
 <rect x="382" y="41" width="1" height="1" fill="#808080"/>
 <rect x="382" y="43" width="1" height="1" fill="#808080"/>
 <rect x="382" y="45" width="1" height="1" fill="#808080"/>
 <rect x="385" y="35" width="1" height="1" fill="#808080"/>
 <rect x="385" y="37" width="1" height="1" fill="#808080"/>
 <rect x="385" y="41" width="1" height="1" fill="#808080"/>
 <rect x="385" y="43" width="1" height="1" fill="#808080"/>
 <rect x="385" y="45" width="1" height="1" fill="#808080"/>
 <rect x="391" y="30" width="1" height="17" fill="#808080"/>
 <rect x="392" y="30" width="1" height="17" fill="#fff"/>
 <rect x="393" y="30" width="7" height="17" fill="#c8c8c8"/>
 <rect x="394" y="37" width="5" height="1" fill="#000"/>
 <rect x="395" y="38" width="3" height="1" fill="#000"/>
 <rect x="396" y="39" width="1" height="1" fill="#000"/>
 </g>
</svg>
</body></html>
